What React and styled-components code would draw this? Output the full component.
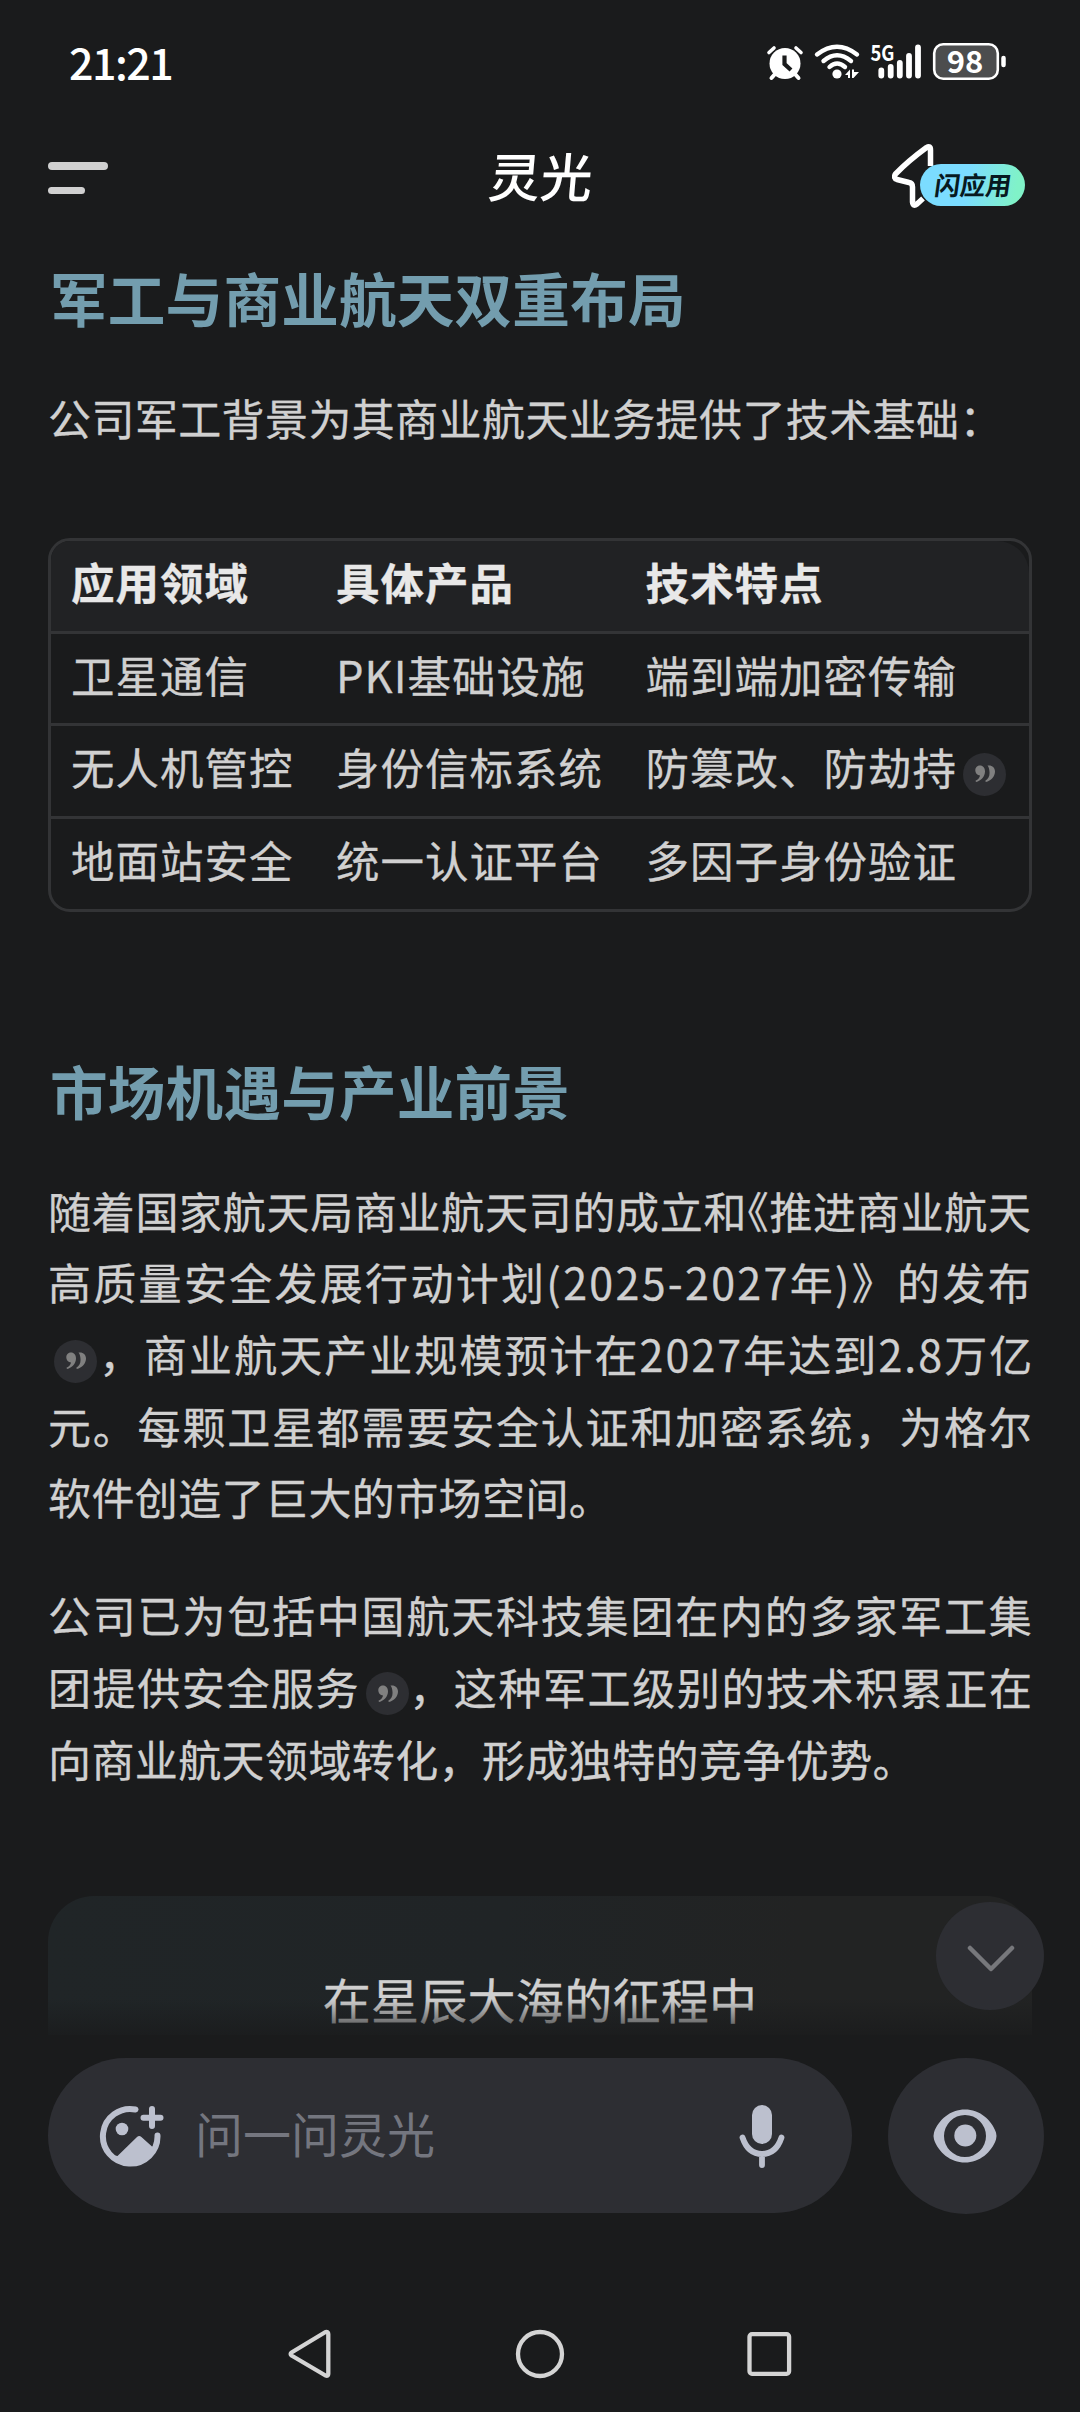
import React from 'react';
import styled, { createGlobalStyle } from 'styled-components';

const GlobalStyle = createGlobalStyle`
  * {
    box-sizing: border-box;
  }
  body {
    margin: 0;
    background: #1a1b1c;
    font-family: 'Noto Sans CJK SC', 'Noto Sans', sans-serif;
  }
  svg {
    display: block;
  }
`;

const Screen = styled.div`
  display: flex;
  flex-direction: column;
  width: 1080px;
  height: 2412px;
  overflow: hidden;
  background: #1a1b1c;
  color: #d0d0d0;
`;

const StatusBar = styled.div`
  display: flex;
  align-items: center;
  height: 122px;
  padding: 0 73px 0 69px;
  color: #fff;
`;

const Time = styled.div`
  flex: 1;
  font-size: 43px;
  font-weight: 500;
  letter-spacing: -1.5px;
  line-height: 1;
`;

const TopBar = styled.div`
  display: grid;
  grid-template-columns: 1fr auto 1fr;
  align-items: center;
  height: 110px;
  padding: 0 55px 0 48px;
`;

const MenuButton = styled.div`
  display: flex;
  flex-direction: column;
  gap: 17px;
  padding-top: 2px;
`;

const MenuLine = styled.div`
  width: ${({ $short }) => ($short ? 37 : 60)}px;
  height: 7.5px;
  border-radius: 4px;
  background: #d0d0d0;
`;

const AppName = styled.div`
  margin-bottom: 5px;
  padding-left: 10px;
  color: #fff;
  font-size: 52px;
  font-weight: 500;
  line-height: 1;
  transform: skewX(-5deg);
`;

const FlashApp = styled.div`
  display: flex;
  justify-content: flex-end;
  align-items: center;
  margin-bottom: 2px;
`;

const FlashPill = styled.div`
  display: flex;
  align-items: center;
  justify-content: center;
  width: 105px;
  height: 42px;
  margin: 17px 0 0 -14px;
  padding: 0 0 1px 1px;
  border-radius: 21px;
  background: linear-gradient(100deg, #7bdcff 45%, #80f2c8 90%);
  color: #07191f;
  font-size: 25.5px;
  font-weight: 700;
  line-height: 1;
  z-index: 1;

  span {
    transform: skewX(-8deg);
  }
`;

const Content = styled.div`
  display: flex;
  flex-direction: column;
  height: 1803px;
  padding: 0 48px;
  overflow: hidden;
`;

const Heading = styled.h2`
  margin: 0;
  padding: ${({ $top }) => $top}px 0 0 2px;
  color: #739dae;
  font-size: 57.6px;
  font-weight: 700;
  letter-spacing: 0.2px;
  line-height: 80px;
`;

const Paragraph = styled.div`
  margin-top: ${({ $top }) => $top}px;
  font-size: 43px;
  line-height: 71.7px;
  -webkit-text-stroke: 0.3px;
`;

const Line = styled.div`
  height: 71.7px;
  letter-spacing: ${({ $spacing = 0.4 }) => $spacing}px;
  white-space: nowrap;
`;

const Half = styled.span`
  font-feature-settings: 'halt';
`;

const Table = styled.div`
  flex: none;
  height: 374px;
  margin-top: 84px;
  border: 3px solid #333436;
  border-radius: 22px;
  overflow: hidden;
`;

const Row = styled.div`
  display: grid;
  grid-template-columns: 265px 309.5px 1fr;
  height: ${({ $head }) => ($head ? 93 : 92.5)}px;
  padding-left: 20px;
  border-bottom: 3px solid #333436;
  border-top-right-radius: ${({ $head }) => ($head ? 32 : 0)}px;
  background: ${({ $head }) => ($head ? '#212224' : 'transparent')};
  color: ${({ $head }) => ($head ? '#e8e8e8' : '#d0d0d0')};
  font-size: 43.5px;
  font-weight: ${({ $head }) => ($head ? 700 : 400)};
  letter-spacing: 1px;
  line-height: 82px;
  white-space: nowrap;
  -webkit-text-stroke: 0.3px;

  &:last-child {
    border-bottom: 0;
  }
`;

const CiteBadge = styled.span`
  display: inline-flex;
  align-items: center;
  justify-content: center;
  width: 43px;
  height: 43px;
  margin: 0 ${({ $gap = 0 }) => $gap}px 0 6px;
  border-radius: 50%;
  background: #2d2e32;
  vertical-align: 2px;
`;

const Poem = styled.div`
  flex: none;
  height: 300px;
  margin-top: 102px;
  padding-top: 66px;
  border-radius: 46px;
  background: linear-gradient(95deg, #202527 0%, #202426 45%, #222323 75%);
  font-size: 48px;
  letter-spacing: 0.3px;
  line-height: 72px;
  text-align: center;
  -webkit-text-stroke: 0.3px;
`;

const Composer = styled.div`
  position: relative;
  display: flex;
  justify-content: space-between;
  margin-top: 23px;
  padding: 0 36px 0 48px;
`;

// fades the scrolled text out just above the input
const Fade = styled.div`
  position: absolute;
  left: 0;
  right: 0;
  top: -59px;
  height: 36px;
  background: linear-gradient(rgba(26, 27, 28, 0), rgba(26, 27, 28, 0.8));
`;

const ScrollDown = styled.div`
  position: absolute;
  right: 36px;
  top: -156px;
  display: flex;
  align-items: center;
  justify-content: center;
  width: 108px;
  height: 108px;
  padding: 6px 0 0 2px;
  border-radius: 50%;
  background: #2d2e33;
`;

const InputBox = styled.div`
  display: flex;
  align-items: center;
  width: 804px;
  height: 155px;
  padding: 0 66px 0 50px;
  border-radius: 78px;
  background: #2d2e33;
`;

const Placeholder = styled.div`
  flex: 1;
  padding: 0 0 7px 31px;
  color: #74767f;
  font-size: 48px;
  line-height: 1;
`;

const EyeButton = styled.div`
  display: flex;
  align-items: center;
  justify-content: center;
  width: 156px;
  height: 156px;
  padding-right: 3px;
  border-radius: 50%;
  background: #2d2e33;
`;

const NavBar = styled.div`
  display: flex;
  justify-content: center;
  align-items: center;
  gap: 178px;
  margin-top: auto;
  height: 116px;
`;

const StatusIcons = () => (
  <svg width="243" height="64" viewBox="764 29 243 64" fill="none" stroke="#fff" strokeLinecap="round">
    <circle cx="785" cy="63.5" r="15.5" fill="#fff" stroke="none" />
    <path d="M769 52.5L774 48M801 52.5L796 48" strokeWidth="3.6" />
    <path d="M775 74L771.5 78M795 74L798.5 78" strokeWidth="4" />
    <path d="M784.5 55.5V64L791 70" stroke="#1a1b1c" strokeWidth="4.2" strokeLinecap="butt" />
    <path d="M817 54.5Q837 39 857 54.5" strokeWidth="4.4" />
    <path d="M823.5 61Q837 49.5 851 61" strokeWidth="4.4" />
    <path d="M829.5 67Q837 60 845 67" strokeWidth="4.4" />
    <circle cx="837" cy="74" r="4.6" fill="#fff" stroke="none" />
    <path d="M845 75L850 69.500V78H848V75ZM852 69.500H854V72H859L853.500 78H852Z" fill="#fff" stroke="none" />
    <text x="870.5" y="61" fill="#fff" stroke="none" fontSize="21.5" fontWeight="700" textLength="24" lengthAdjust="spacingAndGlyphs">5G</text>
    <path d="M881.300 70.500V75.500M890.700 67V75.500M899.800 63V75.500M909 56V75.500M918 47.500V75.500" strokeWidth="5.800" />
    <rect x="934.200" y="44.200" width="63.600" height="34.600" rx="9" fill="#4c4d4e" strokeWidth="2.600" />
    <path d="M1003.500 58V65" strokeWidth="4.500" />
    <text x="965" y="73.200" fill="#fff" stroke="none" fontSize="31" fontWeight="700" textAnchor="middle">98</text>
  </svg>
);

const Bolt = () => (
  <svg width="42" height="66" viewBox="892 142 42 66" fill="none" stroke="#fff" strokeWidth="5.500" strokeLinejoin="round">
    <path d="M930.500 165V149Q930.500 144 926.500 146.500Q908 160 895.500 173Q893 177 897 178.500L909 181.500Q912.500 182 912.500 186V201Q913 206 917 203L923 197.500" />
  </svg>
);

const Cite = props => (
  <CiteBadge {...props}>
    <svg width="20" height="18" viewBox="0 0 20 18" fill="#808080">
      <path d="M5 .5C8 .5 10 3 10 6.500C10 11.500 6 15.800 1 17L.5 15.800C3.200 14.500 4.700 12.800 5 10.500C2.500 10.500 .3 8.300 .3 5.300C.3 2.500 2.500 .5 5 .5Z" />
      <path d="M12.500 .5C17 -.2 20 2.500 20 6.500C20 11.500 16 15.800 10.800 17L10.300 15.800C13.500 14 14.800 11 14.500 7C14.300 4 13.800 2 12.500 .5Z" />
    </svg>
  </CiteBadge>
);

const ImagePlus = () => (
  <svg width="66" height="64" viewBox="98 2103 66 64" fill="none" stroke="#bcc0ce" strokeWidth="6" strokeLinecap="round">
    <path d="M135.500 2108.500A27.300 27.300 0 1 0 157.500 2134.500" />
    <path d="M152 2108V2125M143.500 2116.700H160.500" />
    <circle cx="122" cy="2128" r="6.300" fill="#bcc0ce" stroke="none" />
    <path d="M117.500 2155L137 2136Q139.200 2134 141.400 2136L152 2145.500L157 2146Q148 2165 130.500 2165Q116 2165 108 2153Z" fill="#bcc0ce" stroke="none" />
  </svg>
);

const Mic = () => (
  <svg width="48" height="66" viewBox="738 2103 48 66" fill="none" stroke="#bcc0ce" strokeWidth="5.800" strokeLinecap="round">
    <rect x="752" y="2105" width="20" height="39" rx="10" fill="#bcc0ce" stroke="none" />
    <path d="M742.500 2137.500Q748 2154 762 2154T781.500 2137.500M762 2155V2165" />
  </svg>
);

const Eye = () => (
  <svg width="64" height="54" viewBox="932.500 2109.500 64 54" fill="#bcc0ce">
    <path
      fillRule="evenodd"
      d="M964.500 2110C979 2110 991 2120 995.500 2133Q996.500 2136.500 995.500 2140C991 2153 979 2163 964.500 2163S938 2153 933.500 2140Q932.500 2136.500 933.500 2133C938 2120 950 2110 964.500 2110ZM964.500 2115.500A21 21 0 1 0 964.500 2157.500A21 21 0 1 0 964.500 2115.500Z"
    />
    <circle cx="964.800" cy="2136" r="11" />
  </svg>
);

const rows = [
  ['卫星通信', 'PKI基础设施', '端到端加密传输'],
  ['无人机管控', '身份信标系统', '防篡改、防劫持', true],
  ['地面站安全', '统一认证平台', '多因子身份验证']
];

const row = ([field, product, feature, cited]) => (
  <Row key={field}>
    <div>{field}</div>
    <div>{product}</div>
    <div>
      {feature}
      {cited && <Cite />}
    </div>
  </Row>
);

export default () => (
  <Screen>
    <GlobalStyle />
    <StatusBar>
      <Time>21:21</Time>
      <StatusIcons />
    </StatusBar>
    <TopBar>
      <MenuButton>
        <MenuLine />
        <MenuLine $short />
      </MenuButton>
      <AppName>灵光</AppName>
      <FlashApp>
        <Bolt />
        <FlashPill>
          <span>闪应用</span>
        </FlashPill>
      </FlashApp>
    </TopBar>
    <Content>
      <Heading $top={25}>军工与商业航天双重布局</Heading>
      <Paragraph $top={45}>
        <Line>公司军工背景为其商业航天业务提供了技术基础：</Line>
      </Paragraph>
      <Table>
        <Row $head>
          <div>应用领域</div>
          <div>具体产品</div>
          <div>技术特点</div>
        </Row>
        {rows.map(row)}
      </Table>
      <Heading $top={138}>市场机遇与产业前景</Heading>
      <Paragraph $top={45}>
        <Line $spacing={0.7}>
          随着国家航天局商业航天司的成立和<Half>《</Half>推进商业航天
        </Line>
        <Line $spacing={2.3}>高质量安全发展行动计划(2025-2027年)》的发布</Line>
        <Line $spacing={2.05}>
          <Cite $gap={2} />，商业航天产业规模预计在2027年达到2.8万亿
        </Line>
        <Line $spacing={1.8}>元。每颗卫星都需要安全认证和加密系统，为格尔</Line>
        <Line>软件创造了巨大的市场空间。</Line>
      </Paragraph>
      <Paragraph $top={46}>
        <Line $spacing={1.8}>公司已为包括中国航天科技集团在内的多家军工集</Line>
        <Line $spacing={1.6}>
          团提供安全服务
          <Cite />
          ，这种军工级别的技术积累正在
        </Line>
        <Line>向商业航天领域转化，形成独特的竞争优势。</Line>
      </Paragraph>
      <Poem>在星辰大海的征程中</Poem>
    </Content>
    <Composer>
      <Fade />
      <ScrollDown>
        <svg width="48" height="28" viewBox="0 0 48 28" fill="none" stroke="#77787c" strokeWidth="4.500" strokeLinecap="round" strokeLinejoin="round">
          <path d="M3 3L24 24L45 3" />
        </svg>
      </ScrollDown>
      <InputBox>
        <ImagePlus />
        <Placeholder>问一问灵光</Placeholder>
        <Mic />
      </InputBox>
      <EyeButton>
        <Eye />
      </EyeButton>
    </Composer>
    <NavBar>
      <svg width="50" height="50" viewBox="286 2329 50 50" fill="none" stroke="#d4d4d4" strokeWidth="4.300" strokeLinejoin="round">
        <path d="M290.500 2352.500L324.500 2332Q327.300 2331.500 327.300 2334V2374Q327.300 2376.500 324.500 2375.500L290.500 2355.500Q289 2354 290.500 2352.500Z" />
      </svg>
      <svg width="50" height="50" viewBox="0 0 50 50" fill="none" stroke="#d4d4d4" strokeWidth="4.300">
        <circle cx="25" cy="25" r="22" />
      </svg>
      <svg width="50" height="50" viewBox="0 0 50 50" fill="none" stroke="#d4d4d4" strokeWidth="4.300">
        <rect x="6.500" y="5.200" width="39.600" height="39.600" rx="2.500" />
      </svg>
    </NavBar>
  </Screen>
);
